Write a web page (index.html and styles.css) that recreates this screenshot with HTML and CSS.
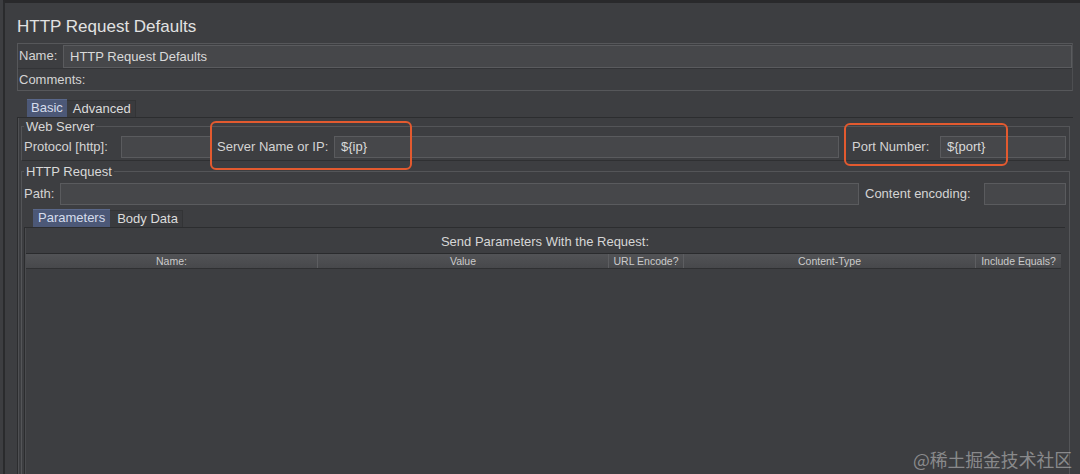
FILE: index.html
```html
<!DOCTYPE html>
<html lang="en">
<head>
    <meta charset="UTF-8">
    <title>HTTP Request Defaults</title>
    <link rel="stylesheet" href="styles.css">
</head>
<body>
    <div class="app">
        <div class="editor">
            <h1 class="title">HTTP Request Defaults</h1>

            <div class="name-box">
                <div class="name-row">
                    <span class="lbl">Name:</span>
                    <div class="field field-name">HTTP Request Defaults</div>
                </div>
                <div class="comments-row">
                    <span class="lbl">Comments:</span>
                </div>
            </div>

            <div class="tabs">
                <div class="tab active">Basic</div>
                <div class="tab">Advanced</div>
            </div>

            <div class="tab-panel">
                <fieldset class="group">
                    <legend>Web Server</legend>
                    <div class="row">
                        <span class="lbl lbl-protocol">Protocol [http]:</span>
                        <div class="field field-protocol"></div>
                        <span class="lbl lbl-server">Server Name or IP:</span>
                        <div class="field field-server">${ip}</div>
                        <span class="lbl lbl-port">Port Number:</span>
                        <div class="field field-port">${port}</div>
                    </div>
                </fieldset>

                <fieldset class="group group-request">
                    <legend>HTTP Request</legend>
                    <div class="row">
                        <span class="lbl lbl-path">Path:</span>
                        <div class="field field-path"></div>
                        <span class="lbl lbl-encoding">Content encoding:</span>
                        <div class="field field-encoding"></div>
                    </div>

                    <div class="tabs sub-tabs">
                        <div class="tab active">Parameters</div>
                        <div class="tab">Body Data</div>
                    </div>

                    <div class="params">
                        <div class="caption">Send Parameters With the Request:</div>
                        <div class="table">
                            <div class="thead">
                                <div class="th col-name">Name:</div>
                                <div class="th col-value">Value</div>
                                <div class="th col-url">URL Encode?</div>
                                <div class="th col-type">Content-Type</div>
                                <div class="th col-eq">Include Equals?</div>
                            </div>
                        </div>
                    </div>
                </fieldset>
            </div>
        </div>
    </div>

    <!-- annotations drawn over the screenshot -->
    <div class="mark mark-server"></div>
    <div class="mark mark-port"></div>
    <div class="watermark">@稀土掘金技术社区</div>
</body>
</html>
```

FILE: styles.css
```css
body {
    margin: 0;
    width: 1080px;
    height: 474px;
    overflow: hidden;
    position: relative;
    background-color: #3d3e41;
    color: #d4d4d4;
    font-family: "Liberation Sans", Arial, sans-serif;
    font-size: 13px;
}
.app {
    height: 471px;
    margin-left: 3px;
    border-top: 3px solid #29292b;
    border-left: 2px solid #2a2b2d;
}
.editor {
    display: flex;
    flex-direction: column;
    height: 100%;
    padding: 0 7px 0 12px;
}
.title {
    margin: 12px 0 4px 0;
    font-size: 17px;
    font-weight: normal;
    line-height: 24px;
    color: #e2e2e2;
}
.name-box {
    border: 1px solid #56575a;
    border-right-color: #4d4e51;
}
.name-row {
    display: flex;
    align-items: center;
    height: 24px;
    border-bottom: 1px solid #333437;
}
.comments-row {
    display: flex;
    align-items: center;
    height: 21px;
}
.lbl {
    padding-left: 1px;
    white-space: nowrap;
    line-height: 16px;
}
.name-box .lbl {
    padding-left: 1px;
    width: 44px;
}
.field {
    height: 20px;
    line-height: 20px;
    padding-left: 6px;
    background-color: #46474a;
    border: 1px solid #5a5b5e;
    color: #dadada;
    box-sizing: content-box;
}
.field-name {
    flex: 1;
    height: 21px;
    line-height: 21px;
}

/* tabs */
.tabs {
    display: flex;
    align-items: flex-end;
    margin: 8px 0 0 10px;
    height: 18px;
}
.tab {
    height: 16px;
    line-height: 16px;
    padding: 0 4px 0 6px;
    background-color: #3a3b3e;
    border-top: 1px solid #333436;
    border-right: 1px solid #333436;
    color: #dcdcdc;
}
.tab.active {
    height: 17px;
    padding: 0 4px;
    background-color: #4c5877;
    border: none;
    border-top: 1px solid #59678a;
    color: #d5dcec;
}
.tab-panel {
    flex: 1;
    display: flex;
    flex-direction: column;
    padding: 1px 3px 0 3px;
    border-top: 1px solid #2c2d2f;
    border-left: 1px solid #2c2d2f;
    box-shadow: inset 1px 0 0 #4f5053;
}

/* fieldsets */
.group {
    margin: 0;
    padding: 2px 3px 2px 1px;
    border: 1px solid #545558;
    border-bottom-color: #2f3032;
}
.group legend {
    margin-left: 1px;
    padding: 0 2px;
    font-size: 13px;
    line-height: 15px;
    color: #d8d8d8;
}
.group-request {
    flex: 1;
    display: flex;
    flex-direction: column;
    margin-top: 3px;
    padding-top: 4px;
    padding-bottom: 0;
    border-bottom: none;
}
.row {
    display: flex;
    align-items: center;
    height: 22px;
}
.row .field {
    height: 20px;
}
.lbl-protocol { width: 97px; }
.field-protocol { width: 82px; }
.lbl-server { width: 117px; margin-left: 5px; }
.field-server { flex: 1; }
.lbl-port { width: 88px; margin-left: 12px; }
.field-port { width: 118px; }
.lbl-path { width: 36px; }
.field-path { flex: 1; }
.lbl-encoding { width: 119px; margin-left: 5px; }
.field-encoding { width: 74px; }

.sub-tabs {
    margin: 4px 0 0 10px;
}
.sub-tabs .tab.active {
    padding: 0 5px;
}
.sub-tabs .tab {
    padding-left: 7px;
}

/* parameters panel */
.params {
    flex: 1;
    margin: 0 1px;
    border-top: 1px solid #2c2d2f;
    border-left: 1px solid #2c2d2f;
    box-shadow: inset 1px 0 0 #4a4b4e;
}
.caption {
    margin-top: 6px;
    text-align: center;
    line-height: 16px;
    color: #d6d6d6;
}
.table {
    margin: 3px 4px 0 1px;
    border-top: 1px solid #2a2b2d;
}
.thead {
    display: flex;
    height: 14px;
    background: linear-gradient(#525356, #47484b);
    border-bottom: 1px solid #2f3032;
}
.th {
    font-size: 10.5px;
    line-height: 14px;
    text-align: center;
    color: #cbcbcb;
    border-right: 1px solid #5d5e61;
    white-space: nowrap;
    overflow: hidden;
}
.col-name { width: 291px; }
.col-value { width: 290px; }
.col-url { width: 74px; }
.col-type { width: 291px; }
.col-eq { flex: 1; border-right: none; }

/* annotations */
.mark {
    position: absolute;
    border: 2px solid #e35a2f;
    border-radius: 6px;
}
.mark-server {
    left: 210px;
    top: 121px;
    width: 198px;
    height: 45px;
}
.mark-port {
    left: 844px;
    top: 123px;
    width: 160px;
    height: 39px;
}
.watermark {
    position: absolute;
    right: 8px;
    bottom: 4px;
    font-family: "Noto Sans CJK SC", sans-serif;
    font-size: 17.8px;
    line-height: 22px;
    color: rgba(235, 235, 235, 0.45);
}
```
